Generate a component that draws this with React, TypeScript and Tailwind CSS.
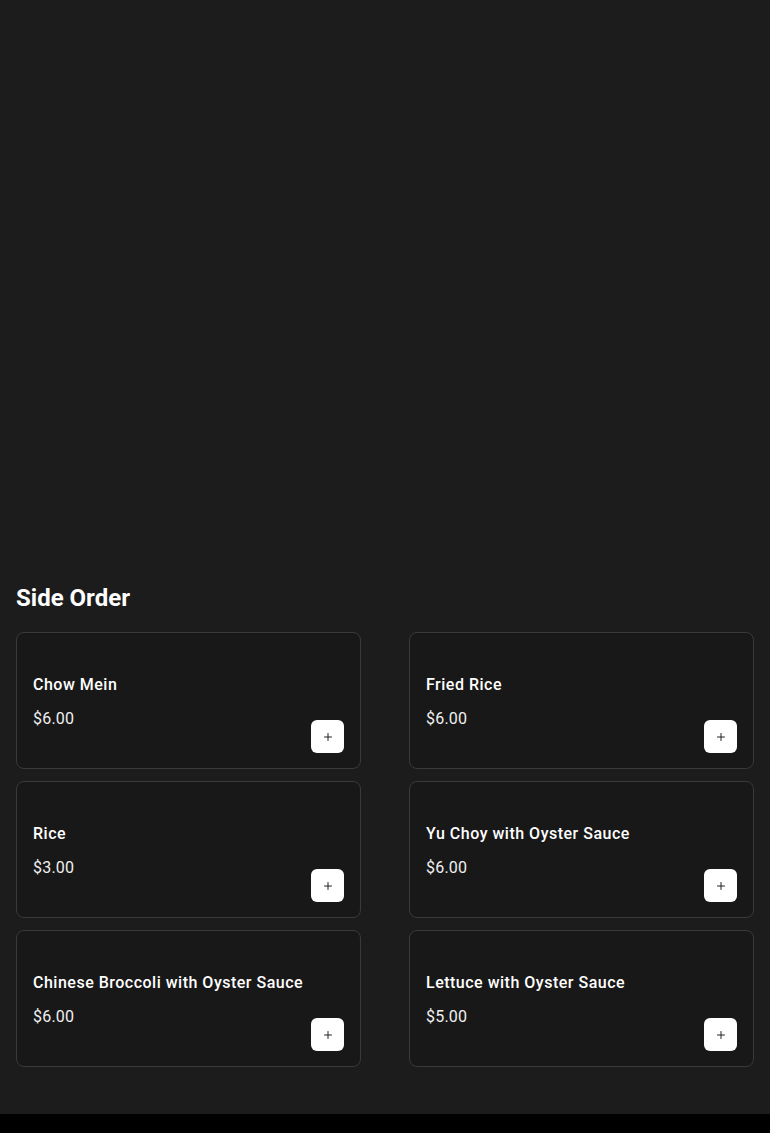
import { Plus } from "lucide-react";

const items = [
    { name: "Chow Mein", price: "$6.00" },
    { name: "Fried Rice", price: "$6.00" },
    { name: "Rice", price: "$3.00" },
    { name: "Yu Choy with Oyster Sauce", price: "$6.00" },
    { name: "Chinese Broccoli with Oyster Sauce", price: "$6.00" },
    { name: "Lettuce with Oyster Sauce", price: "$5.00" },
];

export default function App() {
    return (
        <div className="min-h-[1133px] flex flex-col bg-[#1c1c1c] text-white" style={{ fontFamily: "Roboto, 'Liberation Sans', sans-serif" }}>
            <main className="flex-1 px-4">
                <div className="h-[582px]" />
                <h2 className="text-2xl leading-8 font-bold text-white">Side Order</h2>
                <div className="grid grid-cols-2 gap-x-12 gap-y-3 mt-[18px] pb-[47px]">
                    {items.map(item => (
                        <MenuCard key={item.name} name={item.name} price={item.price} />
                    ))}
                </div>
            </main>
            <footer className="h-[19px] bg-black" />
        </div>
    );
}

const MenuCard = ({ name, price }: { name: string; price: string }) => {
    return (
        <div className="h-[137px] p-4 flex justify-between rounded-lg border border-[#3a3a3a] bg-[#181818]">
            <div className="flex flex-col">
                <div className="h-6" />
                <span className="text-base leading-6 font-medium tracking-[0.5px] text-white">{name}</span>
                <span className="mt-2.5 text-base leading-6 tracking-[0.2px] text-[#f0f0f0]">{price}</span>
            </div>
            <button className="self-end w-[33px] h-[33px] -mb-px flex items-center justify-center rounded-md bg-white">
                <Plus className="w-3 h-3 text-[#222]" strokeWidth={2} />
            </button>
        </div>
    );
};
